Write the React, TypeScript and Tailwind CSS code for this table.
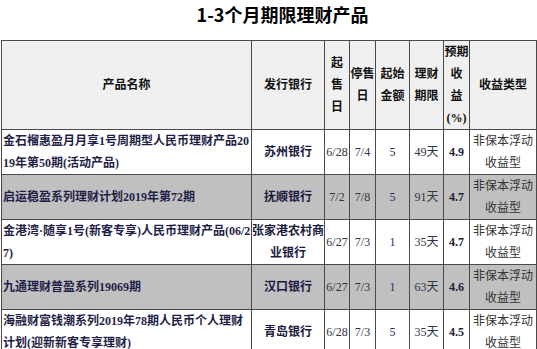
const rows = [
  {
    name: <>金石榴惠盈月月享1号周期型人民币理财产品20<br />19年第50期(活动产品)</>,
    bank: <>苏州银行</>,
    start: "6/28",
    end: "7/4",
    min: "5",
    term: "49天",
    rate: "4.9",
    gray: false,
  },
  {
    name: <>启运稳盈系列理财计划2019年第72期</>,
    bank: <>抚顺银行</>,
    start: "7/2",
    end: "7/8",
    min: "5",
    term: "91天",
    rate: "4.7",
    gray: true,
  },
  {
    name: <>金港湾·随享1号(新客专享)人民币理财产品(06/2<br />7)</>,
    bank: <>张家港农村商<br />业银行</>,
    start: "6/27",
    end: "7/3",
    min: "1",
    term: "35天",
    rate: "4.7",
    gray: false,
  },
  {
    name: <>九通理财普盈系列19069期</>,
    bank: <>汉口银行</>,
    start: "6/27",
    end: "7/3",
    min: "1",
    term: "63天",
    rate: "4.6",
    gray: true,
  },
  {
    name: <>海融财富钱潮系列2019年78期人民币个人理财<br />计划(迎新新客专享理财)</>,
    bank: <>青岛银行</>,
    start: "6/28",
    end: "7/3",
    min: "5",
    term: "35天",
    rate: "4.5",
    gray: false,
  },
];

const th = "border border-[#4a4a4a] font-bold text-center align-middle text-[#111] px-0";
const td = "border border-[#4a4a4a] text-center align-middle px-0";

export default function App() {
  return (
    <div className="w-[537px] h-[349px] overflow-hidden bg-white font-['Liberation_Serif','Noto_Sans_CJK_SC',serif] text-[12px] leading-[22px]">
      <div className="h-[28px] pl-7 text-center font-['Noto_Sans_CJK_SC',sans-serif] text-[18px] font-bold leading-[28px] text-black">
        1-3个月期限理财产品
      </div>
      <table className="mt-[12px] ml-[1px] w-[535px] table-fixed border-collapse">
        <colgroup>
          <col className="w-[250px]" />
          <col className="w-[73px]" />
          <col className="w-[25px]" />
          <col className="w-[26px]" />
          <col className="w-[34px]" />
          <col className="w-[34px]" />
          <col className="w-[26px]" />
          <col className="w-[67px]" />
        </colgroup>
        <thead>
          <tr className="bg-[#f0f0f0]">
            <th className={th}>产品名称</th>
            <th className={th}>发行银行</th>
            <th className={th}>起<br />售<br />日</th>
            <th className={th}>停售<br />日</th>
            <th className={th}>起始<br />金额</th>
            <th className={th}>理财<br />期限</th>
            <th className={`${th} whitespace-nowrap`}>预期<br />收<br />益<br />(%)</th>
            <th className={th}>收益类型</th>
          </tr>
        </thead>
        <tbody>
          {rows.map((r, i) => (
            <tr key={i} className={r.gray ? "bg-[#c0c0c0]" : "bg-white"}>
              <td className="border border-[#4a4a4a] pl-[1px] text-left align-middle font-semibold text-[#1f1f48] break-all">
                {r.name}
              </td>
              <td className={`${td} font-bold text-[#1a1a40]`}>{r.bank}</td>
              <td className={`${td} text-[#333344]`}>{r.start}</td>
              <td className={`${td} text-[#333344]`}>{r.end}</td>
              <td className={`${td} ${r.min === "1" ? "text-[#4a2070]" : "text-[#2a2a5a]"}`}>{r.min}</td>
              <td className={`${td} text-[#333344]`}>{r.term}</td>
              <td className={`${td} font-bold text-[#222233]`}>{r.rate}</td>
              <td className={`${td} text-[#333]`}>非保本浮动<br />收益型</td>
            </tr>
          ))}
        </tbody>
      </table>
    </div>
  );
}
